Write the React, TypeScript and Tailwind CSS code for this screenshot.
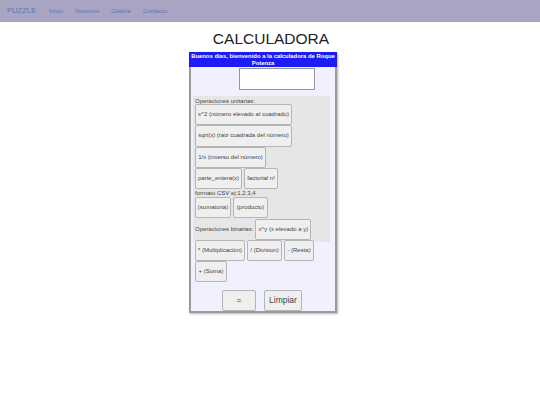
import React from "react";

const Btn = ({ children, className = "" }: { children: React.ReactNode; className?: string }) => (
  <button
    className={`inline-flex items-center justify-center whitespace-nowrap h-[21px] px-0 bg-[#efefef] border border-[#b5b5b5] rounded-[2px] text-[6px] text-[#444] align-middle ${className}`}
  >
    {children}
  </button>
);

export default function App() {
  return (
    <div className="w-[540px] h-[405px] bg-white" style={{ fontFamily: '"Liberation Sans", Arial, sans-serif' }}>
      <nav className="h-[22px] bg-[#a8a4c2] flex items-center pl-[7px] text-[#5b78b8]">
        <span className="text-[7.6px] w-[42px]">PUZZLE</span>
        <span className="text-[6.1px] w-[26px]">Inicio</span>
        <span className="text-[6.1px] w-[36px]">Nosotros</span>
        <span className="text-[6.1px] w-[32px]">Galeria</span>
        <span className="text-[6.1px]">Contacto</span>
      </nav>
      <h1 className="text-center text-[15.5px] text-[#222] leading-none mt-[9px] ml-[2px]">CALCULADORA</h1>
      <div className="ml-[189px] mt-[5px] w-[148px] h-[261px] border-2 border-[#9a9a9a] border-t-0 bg-[#f1f0ff] shadow-[1px_1px_2px_rgba(0,0,0,0.3)]">
        <div className="bg-[#1c1cf5] text-white font-bold text-[5.9px] leading-[7px] text-center pt-[1px] pb-[1px] h-[15px] -mx-[2px] px-0 whitespace-nowrap">
          Buenos dias, bienvenido a la calculadora de Roque
          <br />
          Potenza
        </div>
        <div className="ml-[48px] mt-[1px] w-[76px] h-[22px] bg-white border border-[#999]" />
        <div className="mt-[6px] ml-[2px] w-[137px] h-[146px] bg-[#e7e6e6] pl-[2px] pt-[2px] text-[6px] text-[#444]">
          <div className="leading-[6px]">Operaciones unitarias:</div>
          <div className="flex flex-col items-start">
            <Btn className="w-[97px]">x^2 (número elevado al cuadrado)</Btn>
            <Btn className="w-[97px] h-[22px]">sqrt(x) (raiz cuadrada del número)</Btn>
            <Btn className="w-[71px]">1/x (inverso del número)</Btn>
            <div className="flex gap-[2px]">
              <Btn className="w-[47px]">parte_entera(x)</Btn>
              <Btn className="w-[34px]">factorial n!</Btn>
            </div>
          </div>
          <div className="leading-[7px] mt-[1px]">formato CSV ej:1,2,3,4</div>
          <div className="flex gap-[2px]">
            <Btn className="w-[36px]">(sumatoria)</Btn>
            <Btn className="w-[35px]">(producto)</Btn>
          </div>
          <div className="flex items-center gap-[2px] mt-[1px]">
            <span>Operaciones binarias:</span>
            <Btn className="w-[56px]">x^y (x elevado a y)</Btn>
          </div>
          <div className="flex gap-[2px]">
            <Btn className="w-[50px]">* (Multiplicación)</Btn>
            <Btn className="w-[35px]">/ (Division)</Btn>
            <Btn className="w-[30px]">- (Resta)</Btn>
          </div>
          <div className="flex">
            <Btn className="w-[32px]">+ (Suma)</Btn>
          </div>
        </div>
        <div className="flex mt-[48px] ml-[31px] gap-[8px]">
          <Btn className="w-[34px] text-[8.5px]">=</Btn>
          <Btn className="w-[38px] text-[8.5px]">Limpiar</Btn>
        </div>
      </div>
    </div>
  );
}
